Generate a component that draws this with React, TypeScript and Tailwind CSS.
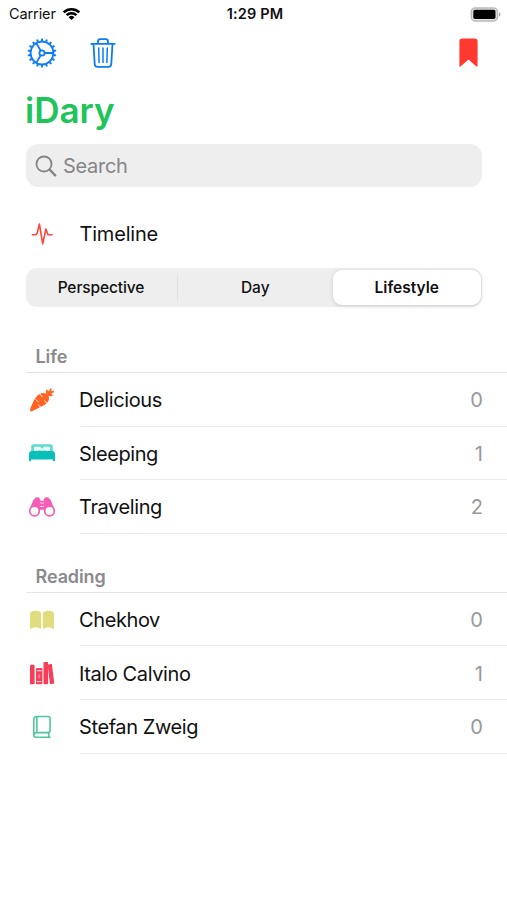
import type { ReactNode } from "react";

function WifiIcon() {
  return (
    <svg className="h-[14px] w-[19px]" viewBox="0 0 19 14">
      <path d="M0.8 4.4A12.6 12.6 0 0 1 18.2 4.4L16.4 6.2A10 10 0 0 0 2.6 6.2Z" />
      <path d="M3.7 7.3A8.4 8.4 0 0 1 15.3 7.3L13.5 9.1A5.8 5.8 0 0 0 5.5 9.1Z" />
      <path d="M6.6 10.2A4.2 4.2 0 0 1 12.4 10.2L9.5 13.1Z" />
    </svg>
  );
}

function BatteryIcon() {
  return (
    <svg className="h-[15px] w-[31px]" viewBox="0 0 31 15">
      <rect x="1.3" y="0.9" width="26.2" height="13" rx="4" fill="#e4e4e4" stroke="#b9b9b9" strokeWidth="1.5" />
      <rect x="3.3" y="2.8" width="22.2" height="9.2" rx="1.8" fill="#000" />
      <path d="M29 5.2C31 6 31 8.8 29 9.6Z" fill="#a5a5a5" />
    </svg>
  );
}

const teeth = Array.from({ length: 18 }, (_, i) => i * 20);

function GearIcon() {
  return (
    <svg className="h-[30px] w-[30px]" viewBox="-15 -15 30 30" fill="none" stroke="#0a7cf5" strokeWidth="1.8">
      <circle r="11.4" />
      {teeth.map((a) => (
        <path key={a} d="M-1.2 -12H1.2L0.8 -14.4H-0.8Z" fill="#0a7cf5" stroke="none" transform={`rotate(${a})`} />
      ))}
      <circle r="2.6" />
      <path d="M2.6 0H11.4M-1.3 -2.25L-5.7 -9.9M-1.3 2.25L-5.7 9.9" />
    </svg>
  );
}

function TrashIcon() {
  return (
    <svg className="h-[30px] w-[26px]" viewBox="0 0 26 30" fill="none" stroke="#0a7cf5" strokeWidth="1.8" strokeLinecap="round" strokeLinejoin="round">
      <path d="M1.3 5.9H24.7M8 5.7V3.6C8 2.2 8.8 1.2 10.3 1.2H15.7C17.2 1.2 18 2.2 18 3.6V5.7" />
      <path d="M3.5 6L4.7 26C4.8 27.9 5.8 28.8 7.5 28.8H18.5C20.2 28.8 21.2 27.9 21.3 26L22.5 6" />
      <path d="M8.7 10L9.1 24.5M13 10V24.5M17.3 10L16.9 24.5" strokeWidth="1.5" />
    </svg>
  );
}

function BookmarkIcon() {
  return (
    <svg className="h-[29px] w-[19px]" viewBox="0 0 19 29">
      <path d="M0.4 3.2C0.4 1.4 1.4 0.4 3.2 0.4H15.8C17.6 0.4 18.6 1.4 18.6 3.2V27.7C18.6 28.8 17.9 29 17.2 28.3L9.5 21.5L1.8 28.3C1.1 29 0.4 28.8 0.4 27.7Z" fill="#ff3830" />
    </svg>
  );
}

function SearchIcon() {
  return (
    <svg className="h-[22px] w-[22px]" viewBox="0 0 22 22" fill="none" stroke="#858588" strokeLinecap="round">
      <circle cx="9" cy="9" r="7.5" strokeWidth="1.8" />
      <path d="M14.6 14.6L20.2 20.4" strokeWidth="2.3" />
    </svg>
  );
}

function PulseIcon() {
  return (
    <svg className="h-[22px] w-[22px]" viewBox="0 0 22 22" fill="none" stroke="#fb493f" strokeWidth="1.6" strokeLinecap="round" strokeLinejoin="round">
      <path d="M1.4 11.7H5L6.3 9.7L8.4 1L11.7 20.8L14.9 6L17 11.7H21" />
    </svg>
  );
}

function CarrotIcon() {
  return (
    <svg className="h-[26px] w-[26px]" viewBox="0 0 26 26">
      <path d="M1.4 24C0.7 23.1 1.1 22 1.6 20.8C3.5 16.6 4.9 12.3 7.6 9.5C10.6 6.2 14.4 5.2 17.6 7C16.4 5 16.8 3.4 18.1 2.4L19.9 4.5L21.2 1.2L22.6 1.7L22.3 4.3L24.8 3.6L25 5.3L22 6.8L24.2 8.2C22.9 9.3 21.1 9.5 19.5 8.8C21 12.3 19.1 15.9 15.8 17.8C11.9 20.1 8 21.8 4.1 23.8C2.9 24.5 2 24.7 1.4 24Z" fill="#ff6422" />
      <path d="M10.9 7.2L13.3 9.7M6.9 12.6L9.2 14.9M17.8 16L15.5 13.8M11.5 20L9.4 17.9" stroke="#fff" strokeWidth="0.9" strokeLinecap="round" />
    </svg>
  );
}

function BedIcon() {
  return (
    <svg className="h-[20px] w-[28px]" viewBox="0 0 28 20">
      <path d="M3.2 8.5V3.4C3.2 1.9 4.1 1.2 5.5 1.2H22.5C23.9 1.2 24.8 1.9 24.8 3.4V8.5Z" fill="#63dacd" />
      <path d="M6 8V5C6 4.1 6.5 3.7 7.3 3.7H11.8C12.6 3.7 13 4.1 13 5L14 5.6L15 5C15 4.1 15.4 3.7 16.2 3.7H20.7C21.5 3.7 22 4.1 22 5V8H19.5Q16 6.5 14 7.8Q12 6.5 8.5 8Z" fill="#fff" opacity="0.85" />
      <path d="M1 17.2V11.2C1 8.9 2.2 7.9 4.2 7.9H23.8C25.8 7.9 27 8.9 27 11.2V17.2C27 18.8 25 18.8 25 17.2V16.5H3V17.2C3 18.8 1 18.8 1 17.2Z" fill="#08c0b7" />
    </svg>
  );
}

function BinocularsIcon() {
  return (
    <svg className="h-[22px] w-[28px]" viewBox="0 0 28 22">
      <path d="M6.9 2.7C7.1 0.9 11.3 0.8 12 3L12.4 4.8H15.6L16 3C16.7 0.8 20.9 0.9 21.1 2.7C22.7 3.4 23.4 5.3 24 7.3L26.4 13.1L16.2 17V13.7H11.8V17L1.6 13.1L4 7.3C4.6 5.3 5.3 3.4 6.9 2.7Z" fill="#f45cb8" />
      <path d="M12 7H16M12 10.4H16" stroke="#fff" strokeWidth="0.9" opacity="0.8" />
      <circle cx="6.5" cy="15" r="4.8" fill="#fff" stroke="#f45cb8" strokeWidth="1.7" />
      <circle cx="21.5" cy="15" r="4.8" fill="#fff" stroke="#f45cb8" strokeWidth="1.7" />
    </svg>
  );
}

function OpenBookIcon() {
  return (
    <svg className="h-[20px] w-[26px]" viewBox="0 0 26 20" fill="#e1dc7d">
      <path d="M1 4C1 2 3.5 0.8 6.5 0.8S12.2 2 12.2 4V17.8C12.2 18.8 11.5 19.1 10.8 18.6C8.3 16.9 5.2 16.9 2.7 18.5C1.8 19.1 1 18.9 1 17.8Z" />
      <path d="M13.8 4C13.8 2 16.5 0.8 19.5 0.8S25 2 25 4V17.8C25 18.9 24.2 19.1 23.3 18.5C20.8 16.9 17.7 16.9 15.2 18.6C14.5 19.1 13.8 18.8 13.8 17.8Z" />
    </svg>
  );
}

function BooksIcon() {
  return (
    <svg className="h-[24px] w-[26px]" viewBox="0 0 26 24" fill="#f83d59">
      <rect x="1" y="3.8" width="4.6" height="19.4" rx="1" />
      <rect x="7" y="7" width="6.4" height="16.2" rx="1" />
      <rect x="14.5" y="1" width="4.6" height="22.2" rx="1" />
      <rect x="19.8" y="3.2" width="4.3" height="19.8" rx="0.8" transform="rotate(-7 22 13)" />
      <path d="M7.8 9.8H12.6M7.8 20.6H12.6" stroke="#fff" strokeWidth="0.9" />
      <rect x="9.2" y="13" width="2" height="4.4" rx="0.8" fill="#fff" opacity="0.35" />
    </svg>
  );
}

function ClosedBookIcon() {
  return (
    <svg className="h-[24px] w-[20px]" viewBox="0 0 20 24" fill="none" stroke="#4fc69c" strokeWidth="1.6" strokeLinejoin="round" strokeLinecap="round">
      <path d="M4.9 17.5V1.5H16C17.4 1.5 18.1 2.3 18.1 3.6V15.5C18.1 16.8 17.4 17.6 16 17.6H4.3C0.9 17.6 0.9 22.2 4.3 22.2H18" />
      <path d="M4.9 1.5C2.7 1.5 1.8 2.6 1.8 4.5V20M16.7 17.6V22.2" />
    </svg>
  );
}

type Item = { name: string; count: number; icon: ReactNode };

const groups: { title: string; items: Item[] }[] = [
  {
    title: "Life",
    items: [
      { name: "Delicious", count: 0, icon: <CarrotIcon /> },
      { name: "Sleeping", count: 1, icon: <BedIcon /> },
      { name: "Traveling", count: 2, icon: <BinocularsIcon /> },
    ],
  },
  {
    title: "Reading",
    items: [
      { name: "Chekhov", count: 0, icon: <OpenBookIcon /> },
      { name: "Italo Calvino", count: 1, icon: <BooksIcon /> },
      { name: "Stefan Zweig", count: 0, icon: <ClosedBookIcon /> },
    ],
  },
];

function Group({ title, items }: { title: string; items: Item[] }) {
  return (
    <section>
      <h2 className="ml-[26px] flex h-[33px] items-center border-b-[1.5px] border-[#e6e6e7] pt-px pl-[9.5px] text-[18px] font-semibold tracking-[-0.1px] text-[#8a8a8d]">
        {title}
      </h2>
      <ul>
        {items.map((item) => (
          <li key={item.name} className="flex h-[53.6px] items-stretch pl-[26px]">
            <span className="flex w-8 items-center justify-center">{item.icon}</span>
            <span className="ml-[22px] flex flex-1 items-center justify-between border-b-[1.5px] border-[#e9e9ea] pt-[2px] pr-[24.5px] text-[20px]">
              <span className="-ml-px tracking-[-0.4px]">{item.name}</span>
              <span className="tracking-[-0.4px] text-[#98989b]">{item.count}</span>
            </span>
          </li>
        ))}
      </ul>
    </section>
  );
}

export default function App() {
  return (
    <main className="h-[900px] w-[507px] overflow-hidden bg-white font-['Inter','Liberation_Sans',sans-serif] text-[#101011]">
      <header className="grid h-[28px] grid-cols-3 items-center pr-[6px] pl-[9px]">
        <div className="flex items-center gap-[6px] text-[14.5px] tracking-[-0.1px]">
          <span>Carrier</span>
          <WifiIcon />
        </div>
        <span className="text-center text-[14.5px] font-semibold tracking-[0.15px]">1:29 PM</span>
        <div className="flex justify-end">
          <BatteryIcon />
        </div>
      </header>
      <nav className="flex h-[48px] items-center pt-px pr-[29px] pl-[27px]">
        <GearIcon />
        <span className="ml-[33px]">
          <TrashIcon />
        </span>
        <span className="ml-auto">
          <BookmarkIcon />
        </span>
      </nav>
      <h1 className="ml-[25px] flex h-[68px] items-center text-[35px] font-semibold text-[#20c45a]">iDary</h1>
      <div className="mr-[25px] ml-[25.5px] flex h-[43px] items-center gap-[6.5px] rounded-[12px] bg-[#eeeeef] pt-px pl-[9px] text-[20px] tracking-[-0.3px] text-[#858588]">
        <SearchIcon />
        <span>Search</span>
      </div>
      <div className="mt-[20px] flex h-[54px] items-center pl-[26px] text-[20px] tracking-[-0.2px]">
        <span className="flex w-8 justify-center">
          <PulseIcon />
        </span>
        <span className="ml-[21.5px]">Timeline</span>
      </div>
      <div className="mr-[25px] ml-[25.5px] mt-[7px] flex h-[39px] items-center rounded-[11px] bg-[#eeeeef] py-[2px] pr-[1.5px] text-[15.5px] font-medium">
        <span className="flex h-[24px] w-[152px] items-center justify-center border-r-[1.5px] border-[#dedee0] pt-px tracking-[-0.1px]">Perspective</span>
        <span className="flex flex-1 items-center justify-center pt-px">Day</span>
        <span className="flex h-full w-[147.5px] items-center justify-center rounded-[9px] bg-white pt-px font-semibold shadow-[0_1px_4px_rgba(0,0,0,0.15)]">
          Lifestyle
        </span>
      </div>
      <div className="mt-[33px] flex flex-col gap-[26px]">
        {groups.map((group) => (
          <Group key={group.title} {...group} />
        ))}
      </div>
    </main>
  );
}
